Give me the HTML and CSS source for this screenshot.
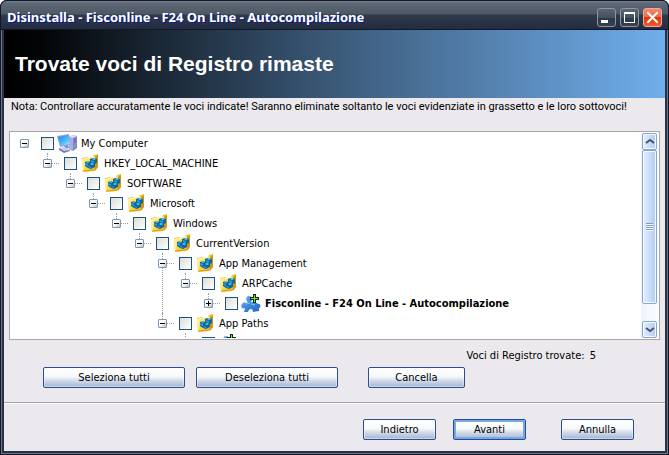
FILE: index.html
```html
<!DOCTYPE html>
<html lang="it">

<head>
    <meta charset="UTF-8">
    <meta name="viewport" content="width=device-width, initial-scale=1.0">
    <title>Disinstalla - Fisconline - F24 On Line - Autocompilazione</title>
    <link rel="stylesheet" href="styles.css">
</head>

<body>
    <!-- Shared icons -->
    <svg class="sprite" aria-hidden="true">
        <defs>
            <linearGradient id="gold" x1="0" y1="0" x2="1" y2="1">
                <stop offset="0" stop-color="#fff3a0" />
                <stop offset="0.5" stop-color="#fbd84a" />
                <stop offset="1" stop-color="#f0b020" />
            </linearGradient>
            <linearGradient id="screen" x1="0" y1="0" x2="1" y2="1">
                <stop offset="0" stop-color="#1f86ec" />
                <stop offset="0.5" stop-color="#45b4f6" />
                <stop offset="1" stop-color="#a4f2fb" />
            </linearGradient>
            <linearGradient id="puzzle" x1="0" y1="0" x2="1" y2="1">
                <stop offset="0" stop-color="#6fb2f2" />
                <stop offset="0.5" stop-color="#3c86dc" />
                <stop offset="1" stop-color="#1f66c4" />
            </linearGradient>
        </defs>
        <symbol id="icon-computer" viewBox="0 0 20 20">
            <path d="M12 4l4-2 4 1v12l-4 3-4-2z" fill="#8287c8" />
            <path d="M12 4l4 1v13l-4-2z" fill="#a9aee0" />
            <path d="M12 4l4-2 4 1-4 2z" fill="#dcdff5" />
            <path d="M17 7l2-1M17 9l2-1" stroke="#5960a8" />
            <path d="M17 12h1v2h-1z" fill="#55d45a" />
            <path d="M0 3l12-2 2 11-11 2z" fill="#8fa6e6" />
            <path d="M1 4l10-2 2 9-9 2z" fill="url(#screen)" />
            <path d="M7 13l4-1 1 3-3 1z" fill="#8088c4" />
            <path d="M2 15l6-1 5 3-6 2z" fill="#c6caea" />
            <path d="M2 15l5 3 6-1v1l-6 2-5-3z" fill="#7379b5" />
        </symbol>
        <symbol id="icon-key" viewBox="0 0 18 18">
            <path d="M1 4l5-1 1 1 5-1 1-2 4-1v13l-4 4-11 1z" fill="#f0c030" />
            <path d="M14 3l3-2v12l-3 4z" fill="#cf9614" />
            <path d="M1 5l13-2v13L2 18z" fill="url(#gold)" />
            <path d="M2 17V5l12-2" stroke="#fff6bd" fill="none" />
            <path d="M2 17l11-1 4-4" stroke="#dd9a10" fill="none" />
            <path d="M4 8l3-1 2 1V5l3-1 4 1v4l-2 1v3l-4 2-3-1-3-2z" fill="#11669c" />
            <path d="M5 8l2-1 1 1-1 1zM11 5l2-1 2 1-2 1zM9 10l2-1 2 1-2 1z" fill="#63d4f2" />
            <path d="M4 9l3 1v2l-3-1zM10 6l3 1v2l-3-1zM7 12l3 1v1l-3-1z" fill="#259fd8" />
        </symbol>
        <symbol id="icon-puzzle" viewBox="0 0 20 20">
            <path d="M7 9C4 7 5 3 8 3s4 3 2 6l6 1 1 1c3-1 3 4 1 4v3l-6 1c0-4-4-4-5 0H3l1-4c-4 2-5-3-2-5 1-1 3 0 3 0z" fill="url(#puzzle)" />
            <path d="M5 11l4-1M10 11l4 1" stroke="#8fc3f5" />
            <path d="M12 1h3v3h3v3h-3v3h-3V7H9V4h3z" fill="#0c280c" />
            <path d="M13 2h1v3h3v1h-3v3h-1V6h-3V5h3z" fill="#6de82f" />
        </symbol>
    </svg>

    <div class="window">
        <header class="titlebar">
            <span class="title">Disinstalla - Fisconline - F24 On Line - Autocompilazione</span>
            <div class="window-controls">
                <button class="window-button" aria-label="Riduci a icona">
                    <svg viewBox="0 0 19 19"><path d="M4 12h7v3H4z" fill="#fff" /></svg>
                </button>
                <button class="window-button" aria-label="Ingrandisci">
                    <svg viewBox="0 0 19 19"><path d="M4 4h11v11H4zM5 6v8h9V6z" fill="#fff" fill-rule="evenodd" /></svg>
                </button>
                <button class="window-button close" aria-label="Chiudi">
                    <svg viewBox="0 0 19 19"><path d="M5 5l9 9M14 5l-9 9" stroke="#fff" stroke-width="2" stroke-linecap="square" /></svg>
                </button>
            </div>
        </header>

        <main class="content">
            <div class="banner">
                <h1>Trovate voci di Registro rimaste</h1>
            </div>

            <p class="note">Nota: Controllare accuratamente le voci indicate! Saranno eliminate soltanto le voci evidenziate in grassetto e le loro sottovoci!</p>

            <div class="tree">
                <div class="tree-view">
                    <ul class="root">
                        <li>
                            <div class="row">
                                <button class="toggle" aria-label="Comprimi"></button>
                                <label><input type="checkbox"><svg class="icon"><use href="#icon-computer" /></svg>My Computer</label>
                            </div>
                            <ul>
                                <li>
                                    <div class="row">
                                        <button class="toggle" aria-label="Comprimi"></button>
                                        <label><input type="checkbox"><svg class="icon key"><use href="#icon-key" /></svg>HKEY_LOCAL_MACHINE</label>
                                    </div>
                                    <ul>
                                        <li>
                                            <div class="row">
                                                <button class="toggle" aria-label="Comprimi"></button>
                                                <label><input type="checkbox"><svg class="icon key"><use href="#icon-key" /></svg>SOFTWARE</label>
                                            </div>
                                            <ul>
                                                <li>
                                                    <div class="row">
                                                        <button class="toggle" aria-label="Comprimi"></button>
                                                        <label><input type="checkbox"><svg class="icon key"><use href="#icon-key" /></svg>Microsoft</label>
                                                    </div>
                                                    <ul>
                                                        <li>
                                                            <div class="row">
                                                                <button class="toggle" aria-label="Comprimi"></button>
                                                                <label><input type="checkbox"><svg class="icon key"><use href="#icon-key" /></svg>Windows</label>
                                                            </div>
                                                            <ul>
                                                                <li>
                                                                    <div class="row">
                                                                        <button class="toggle" aria-label="Comprimi"></button>
                                                                        <label><input type="checkbox"><svg class="icon key"><use href="#icon-key" /></svg>CurrentVersion</label>
                                                                    </div>
                                                                    <ul>
                                                                        <li>
                                                                            <div class="row">
                                                                                <button class="toggle" aria-label="Comprimi"></button>
                                                                                <label><input type="checkbox"><svg class="icon key"><use href="#icon-key" /></svg>App Management</label>
                                                                            </div>
                                                                            <ul>
                                                                                <li>
                                                                                    <div class="row">
                                                                                        <button class="toggle" aria-label="Comprimi"></button>
                                                                                        <label><input type="checkbox"><svg class="icon key"><use href="#icon-key" /></svg>ARPCache</label>
                                                                                    </div>
                                                                                    <ul>
                                                                                        <li>
                                                                                            <div class="row found">
                                                                                                <button class="toggle collapsed" aria-label="Espandi"></button>
                                                                                                <label><input type="checkbox"><svg class="icon"><use href="#icon-puzzle" /></svg>Fisconline - F24 On Line - Autocompilazione</label>
                                                                                            </div>
                                                                                        </li>
                                                                                    </ul>
                                                                                </li>
                                                                            </ul>
                                                                        </li>
                                                                        <li>
                                                                            <div class="row">
                                                                                <button class="toggle" aria-label="Comprimi"></button>
                                                                                <label><input type="checkbox"><svg class="icon key"><use href="#icon-key" /></svg>App Paths</label>
                                                                            </div>
                                                                            <ul>
                                                                                <li>
                                                                                    <div class="row found leaf">
                                                                                        <label><input type="checkbox" aria-label="Voce"><svg class="icon"><use href="#icon-puzzle" /></svg></label>
                                                                                    </div>
                                                                                </li>
                                                                            </ul>
                                                                        </li>
                                                                    </ul>
                                                                </li>
                                                            </ul>
                                                        </li>
                                                    </ul>
                                                </li>
                                            </ul>
                                        </li>
                                    </ul>
                                </li>
                            </ul>
                        </li>
                    </ul>
                </div>
                <div class="scrollbar">
                    <button class="scroll-button" aria-label="Su">
                        <svg viewBox="0 0 13 15"><path d="M3 9l4-3 4 3" /></svg>
                    </button>
                    <div class="scroll-track">
                        <div class="thumb"><span class="grip"></span></div>
                    </div>
                    <button class="scroll-button" aria-label="Giù">
                        <svg viewBox="0 0 13 15"><path d="M3 6l4 3 4-3" /></svg>
                    </button>
                </div>
            </div>

            <p class="count">Voci di Registro trovate: <span>5</span></p>

            <div class="selection">
                <button class="btn wide">Seleziona tutti</button>
                <button class="btn wide">Deseleziona tutti</button>
                <button class="btn delete">Cancella</button>
            </div>

            <footer class="footer">
                <button class="btn">Indietro</button>
                <button class="btn primary">Avanti</button>
                <button class="btn cancel">Annulla</button>
            </footer>
        </main>
    </div>
</body>

</html>
```

FILE: styles.css
```css
* {
    box-sizing: border-box;
}

body {
    margin: 0;
    background-color: #fff;
    color: #000;
    font-family: "DejaVu Sans Condensed", Tahoma, sans-serif;
    font-size: 11px;
    line-height: 14px;
}

button {
    font: inherit;
    color: inherit;
    padding: 0;
}

.sprite {
    position: absolute;
    width: 0;
    height: 0;
}

/* Window frame */
.window {
    display: flex;
    flex-direction: column;
    height: 100vh;
    min-height: 400px;
    padding: 0 4px 4px;
    border-radius: 7px 7px 0 0;
    background-color: #2a3346;
    box-shadow: inset 0 0 0 1px #12182a, inset 0 0 0 2px #6b7584;
    overflow: hidden;
}

.titlebar {
    display: flex;
    align-items: center;
    justify-content: space-between;
    height: 30px;
    flex: none;
    margin: 0 -4px;
    padding: 4px 6px 0;
    border: 1px solid #12182a;
    border-radius: 7px 7px 0 0;
    background: linear-gradient(#78828e 0, #5f6a76 2px, #4c5864 13px, #2f3a4b 14px, #232c40 100%);
}

.title {
    color: #fff;
    font-family: "Noto Sans", sans-serif;
    font-size: 13px;
    font-weight: bold;
    line-height: 16px;
    text-shadow: 1px 1px 0 #0a1a9c;
}

.window-controls {
    display: flex;
    gap: 4px;
}

.window-button {
    width: 19px;
    height: 19px;
    border: 1px solid #8c95a0;
    border-radius: 3px;
    background: linear-gradient(#5a6673, #45515f 50%, #2c3748 50%, #354154);
}

.window-button svg {
    display: block;
    width: 19px;
    height: 19px;
    margin: -1px;
}

.window-button.close {
    border-color: #f0a898;
    background: linear-gradient(#f08870, #ec6a4c 45%, #e0330c 50%, #f05a2c);
}

.content {
    display: flex;
    flex-direction: column;
    flex: 1;
    min-height: 0;
    background-color: #ebe9ed;
}

.banner {
    display: flex;
    align-items: center;
    flex: none;
    height: 68px;
    padding-left: 11px;
    background: linear-gradient(90deg, #000 0, #040608 6%, #3d5c7c 51%, #70aeec 100%);
}

.banner h1 {
    margin: 0;
    color: #fff;
    font-family: "Liberation Sans", Arial, sans-serif;
    font-size: 21px;
    line-height: 24px;
}

.note {
    margin: 2px 0 0 7px;
    font-family: Roboto, Tahoma, sans-serif;
    white-space: nowrap;
}

/* Registry tree */
.tree {
    display: flex;
    flex: 1;
    min-height: 0;
    margin: 17px 5px 0;
    padding: 1px;
    border: 1px solid #a7a6aa;
    background-color: #fff;
}

.tree-view {
    flex: 1;
    overflow: hidden;
}

.tree ul {
    margin: 0;
    padding: 0 0 0 23px;
    list-style: none;
}

.tree .root {
    padding-left: 9px;
}

.tree li {
    position: relative;
}

/* Dotted connector lines */
.tree li li::before {
    content: "";
    position: absolute;
    top: 0;
    left: 4px;
    height: 10px;
    border-left: 1px dotted #a0a0a0;
}

.tree li li:not(:last-child)::before {
    height: 100%;
}

.tree li li > .row::before {
    content: "";
    position: absolute;
    top: 10px;
    left: 4px;
    width: 12px;
    border-top: 1px dotted #a0a0a0;
}

.row {
    display: flex;
    align-items: center;
    gap: 12px;
    height: 20px;
}

.toggle {
    position: relative;
    width: 9px;
    height: 9px;
    border: 1px solid #7b98b8;
    border-radius: 1px;
    background: linear-gradient(135deg, #fff 40%, #c6c3b6);
}

.toggle::before {
    content: "";
    position: absolute;
    top: 3px;
    left: 1px;
    width: 5px;
    height: 1px;
    background-color: #000;
}

.toggle.collapsed::after {
    content: "";
    position: absolute;
    top: 1px;
    left: 3px;
    width: 1px;
    height: 5px;
    background-color: #000;
}

.leaf {
    padding-left: 21px;
}

.row label {
    display: flex;
    align-items: center;
    line-height: 15px;
    white-space: nowrap;
}

.row input {
    appearance: none;
    width: 13px;
    height: 13px;
    margin: 0;
    border: 1px solid #1c5180;
    background: linear-gradient(135deg, #dcdcd7, #fff);
}

.icon {
    width: 20px;
    height: 20px;
    margin: 0 4px 0 3px;
}

.icon.key {
    width: 18px;
    height: 18px;
    margin: 0 5px 0 4px;
}

.found {
    font-weight: bold;
}

/* Scrollbar */
.scrollbar {
    display: flex;
    flex-direction: column;
    width: 17px;
    padding: 0 1px;
    background: linear-gradient(90deg, #eef3fc, #fbfcff);
}

.scroll-button,
.thumb {
    border: 1px solid #88a6d0;
    border-radius: 2px;
    background: linear-gradient(90deg, #e4effd, #c4d9f8 60%, #b4cbee);
    box-shadow: inset 0 0 0 1px #f4f9ff;
}

.scroll-button {
    flex: none;
    height: 17px;
}

.scroll-button svg {
    display: block;
    width: 13px;
    height: 15px;
    fill: none;
    stroke: #44546c;
    stroke-width: 2;
}

.scroll-track {
    flex: 1;
}

.thumb {
    display: flex;
    align-items: center;
    justify-content: center;
    height: 90%;
}

.grip {
    width: 7px;
    height: 8px;
    background: repeating-linear-gradient(#7f9cc8 0, #7f9cc8 1px, #f4f9ff 1px, #f4f9ff 2px);
}

/* Buttons */
.count {
    margin: 9px 69px 0 0;
    text-align: right;
}

.count span {
    margin-left: 2px;
}

.selection {
    display: flex;
    gap: 11px;
    padding: 4px 0 14px 39px;
}

.btn {
    width: 73px;
    height: 21px;
    border: 1px solid #2c4f8c;
    border-radius: 2px;
    background: linear-gradient(#fff 0, #f6f9fb 45%, #d4dcea 65%, #a3b4d2 100%);
    box-shadow: inset 0 0 0 1px rgba(255, 255, 255, 0.4);
}

.btn.wide {
    width: 142px;
}

.btn.delete {
    width: 97px;
    margin-left: 19px;
}

.btn.primary {
    border-color: #1f4d9c;
    box-shadow: inset 0 0 0 2px #7ba6e4;
}

.btn.cancel {
    margin-left: 18px;
}

.footer {
    display: flex;
    justify-content: flex-end;
    gap: 17px;
    padding: 16px 31px 11px 0;
    border-top: 1px solid #a5a4a8;
    box-shadow: inset 0 1px 0 #fff;
}
```
